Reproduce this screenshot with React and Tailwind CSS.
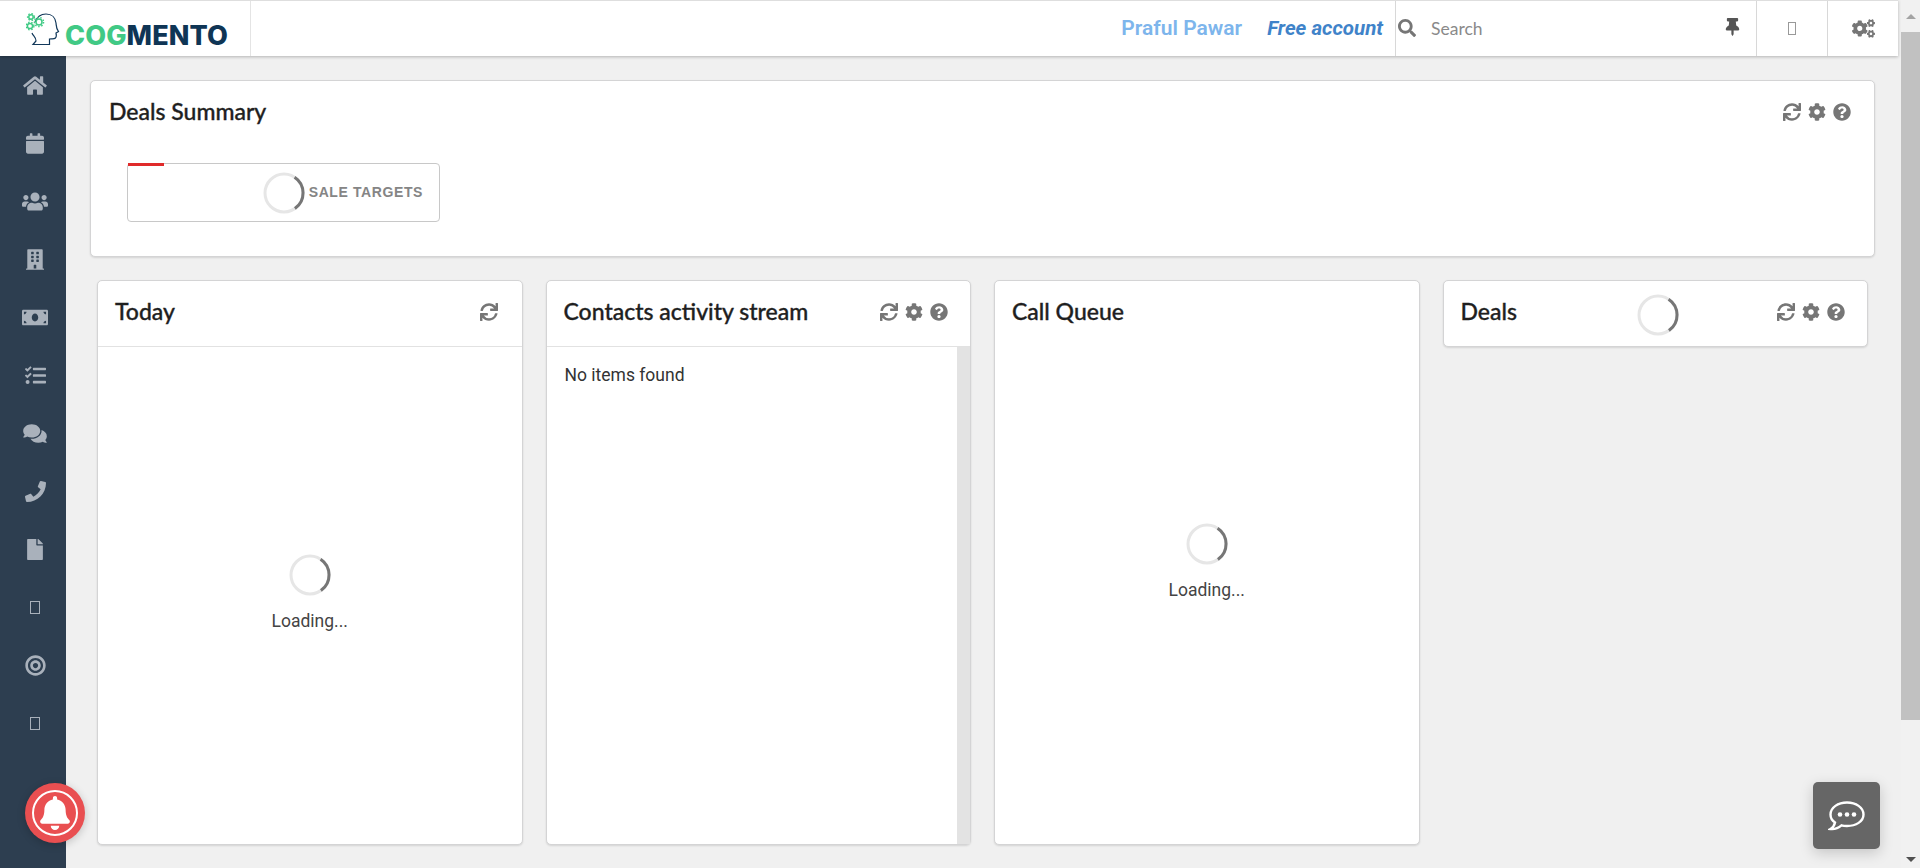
import React from "react";
import {
  FaHome, FaCalendar, FaUsers, FaBuilding, FaMoneyBill, FaTasks, FaComments, FaPhone,
  FaFile, FaBullseye, FaBell, FaSync, FaCog, FaQuestionCircle, FaThumbtack, FaSearch, FaCogs,
} from "react-icons/fa";

// react-icons draws every glyph in a 1em square, so the wide ones get their real size here
const NAV = [
  { Icon: FaHome, size: "w-[24px] h-[21px]" },
  { Icon: FaCalendar, size: "w-[18px] h-[21px]" },
  { Icon: FaUsers, size: "w-[26px] h-[21px]" },
  { Icon: FaBuilding, size: "w-[18px] h-[21px]" },
  { Icon: FaMoneyBill, size: "w-[26px] h-[21px]" },
  { Icon: FaTasks, size: "w-[21px] h-[21px]" },
  { Icon: FaComments, size: "w-[24px] h-[21px]" },
  { Icon: FaPhone, size: "w-[21px] h-[21px]" },
  { Icon: FaFile, size: "w-[16px] h-[21px]" },
  {},
  { Icon: FaBullseye, size: "w-[21px] h-[21px]" },
  {},
];

function Spinner() {
  return (
    <svg width="42" height="42" viewBox="0 0 42 42" className="shrink-0">
      <circle cx="21" cy="21" r="19" fill="none" stroke="#e6e6e6" strokeWidth="3" />
      <path d="M31.6 5.2A19 19 0 0 1 31.9 36.6" fill="none" stroke="#767676" strokeWidth="3" />
    </svg>
  );
}

function Loading() {
  return (
    <div className="flex-1 flex flex-col items-center justify-center">
      <Spinner />
      <div className="mt-[13px] text-[17.5px] leading-[24px] text-[#444]">Loading...</div>
    </div>
  );
}

// refresh / settings / help cluster used on the card headers
function CardIcons({ only }) {
  return (
    <div className={`flex items-center gap-[7px] text-[18px] text-[#767676] ${only ? "mr-[2px]" : ""}`}>
      <FaSync />
      {!only && <FaCog />}
      {!only && <FaQuestionCircle />}
    </div>
  );
}

function Title({ children }) {
  return (
    <h3 className="font-['Lato'] text-[23px] font-medium text-[#1f1f1f] [-webkit-text-stroke:0.35px_#1f1f1f]">{children}</h3>
  );
}

function Card({ title, children, icons, only, className = "" }) {
  return (
    <div className={`bg-white border border-[#d4d4d5] rounded-[5px] shadow-[0_1px_2px_rgba(0,0,0,0.12)] flex flex-col ${className}`}>
      <div className="h-[65px] shrink-0 flex items-center justify-between pl-[17px] pr-[22px] pb-[4px]">
        <Title>{title}</Title>
        {icons}
        <CardIcons only={only} />
      </div>
      {children}
    </div>
  );
}

function Logo() {
  return (
    <div className="h-full flex items-end pl-[26px] pb-[10px]">
      <svg width="34" height="33" viewBox="0 0 34 33" className="shrink-0">
        <path
          d="M9 9C11 4 15 1 20 1C26 1 29.500 5 30 10C30.300 13 30 15 32.500 18.500L30 20C30.500 22 30.500 24 29.500 25C28 26.500 25 25.500 23.500 26V31.500H7L10 28C10 24 7 23 6 20"
          fill="none" stroke="#12385a" strokeWidth="1.200"
        />
        <g fill="none" stroke="#3fca84" strokeWidth="1.500">
          <circle cx="5" cy="4" r="2.200" />
          <circle cx="13" cy="9" r="3" />
          <circle cx="4" cy="13" r="2.600" />
        </g>
        <g fill="none" stroke="#3fca84" strokeWidth="1.400" strokeDasharray="1.500 1.700">
          <circle cx="13" cy="9" r="4.600" />
          <circle cx="4" cy="13" r="3.900" />
          <circle cx="5" cy="4" r="3.400" />
        </g>
      </svg>
      <span className="font-['Inter'] font-extrabold text-[27px] leading-[20px] tracking-[0.1px] ml-[5px]">
        <span className="text-[#41c985]">COG</span>
        <span className="text-[#0f3555]">MENTO</span>
      </span>
    </div>
  );
}

function Header() {
  return (
    <header className="h-[56px] shrink-0 mr-[3px] flex bg-white border-t border-[#dedede] shadow-[0_1px_3px_rgba(0,0,0,0.25)] relative z-10">
      <div className="w-[251px] shrink-0 border-r border-[#e4e4e4]">
        <Logo />
      </div>
      <div className="flex-1 flex items-center justify-end pr-[12px] font-['Roboto']">
        <span className="text-[21px] font-semibold text-[#7db5ec]">Praful Pawar</span>
        <span className="ml-[25px] text-[20.5px] font-bold italic text-[#3f83c9]">Free account</span>
      </div>
      <div className="w-[361px] shrink-0 border-l border-[#d8d8d8] flex items-center pl-[2px] pr-[16px] text-[#767676]">
        <FaSearch className="text-[18px] -mt-[2px]" />
        <span className="ml-[15px] mt-[1px] font-['Lato'] text-[17.5px] text-[#8a8a8a]">Search</span>
        <FaThumbtack className="ml-auto w-[15px] h-[18px] -mt-[3px] text-[#555]" />
      </div>
      <div className="w-[71px] shrink-0 border-l border-[#d8d8d8] flex items-center justify-center">
        <div className="w-[8px] h-[13px] border border-[#999]" />
      </div>
      <div className="w-[71px] shrink-0 border-l border-[#d8d8d8] flex items-center justify-center text-[#767676]">
        <FaCogs className="w-[23px] h-[19px]" />
      </div>
    </header>
  );
}

function Sidebar() {
  return (
    <nav className="w-[66px] shrink-0 bg-[#2d3e50] text-[#a9b1bb]">
      {NAV.map(({ Icon, size }, i) => (
        <div key={i} className="h-[58px] pl-[4px] flex items-center justify-center">
          {Icon ? <Icon className={size} /> : <div className="w-[10px] h-[13px] border border-[#a9b1bb]" />}
        </div>
      ))}
    </nav>
  );
}

function Scrollbar() {
  return (
    <div className="w-[19px] shrink-0 bg-[#f1f1f1] flex flex-col items-center">
      <div className="h-[32px] w-full flex items-center justify-center">
        <div className="w-0 h-0 border-x-[5px] border-x-transparent border-b-[5px] border-b-[#a3a3a3]" />
      </div>
      <div className="h-[688px] w-full bg-[#c1c1c1]" />
      <div className="flex-1" />
      <div className="h-[17px] w-full flex items-center justify-center">
        <div className="w-0 h-0 border-x-[5px] border-x-transparent border-t-[5px] border-t-[#505050]" />
      </div>
    </div>
  );
}

export default function App() {
  return (
    <div className="h-[868px] w-full flex overflow-hidden bg-[#f0f0f0] font-['Roboto'] relative">
      <div className="flex-1 min-w-0 flex flex-col">
        <Header />
        <div className="flex-1 flex min-h-0">
          <Sidebar />
          <main className="flex-1 min-w-0 pt-[24px]">
            <div className="ml-[24px] mr-[26px] h-[177px] bg-white border border-[#d4d4d5] rounded-[5px] shadow-[0_1px_2px_rgba(0,0,0,0.12)]">
              <div className="flex items-center justify-between pl-[18px] pr-[23px] pt-[13px] h-[48px]">
                <Title>Deals Summary</Title>
                <CardIcons />
              </div>
              <div className="ml-[36px] mt-[34px] w-[313px] h-[59px] border border-[#c8c8c8] rounded-[4px] relative flex items-center justify-end pr-[16px]">
                <div className="absolute left-0 -top-px w-[36px] h-[3px] bg-[#e02a2a]" />
                <Spinner />
                <span className="ml-[4px] font-['Liberation_Sans'] text-[14px] font-bold tracking-[0.6px] text-[#858585]">SALE TARGETS</span>
              </div>
            </div>

            <div className="ml-[31px] mr-[33px] mt-[23px] grid grid-cols-4 gap-[23px] items-start">
              <Card title="Today" only className="h-[565px]">
                <div className="flex-1 flex flex-col border-t border-[#e2e2e2] pb-[4px]">
                  <Loading />
                </div>
              </Card>
              <Card title="Contacts activity stream" className="h-[565px]">
                <div className="flex-1 flex border-t border-[#e2e2e2] min-h-0">
                  <div className="flex-1 pl-[18px] pt-[16px] text-[17.5px] leading-[24px] text-[#333]">No items found</div>
                  <div className="w-[13px] bg-[#e3e3e3]" />
                </div>
              </Card>
              <Card title="Call Queue" only className="h-[565px] [&>div:first-child>div]:invisible">
                <div className="flex-1 flex flex-col pb-[66px]">
                  <Loading />
                </div>
              </Card>
              <Card title="Deals" icons={<div className="ml-[120px] mr-auto mt-[6px]"><Spinner /></div>} className="h-[67px]" />
            </div>
          </main>
        </div>
      </div>
      <Scrollbar />

      <div className="absolute left-[25px] top-[783px] w-[60px] h-[60px] rounded-full bg-[#e94f51] shadow-[0_2px_8px_rgba(0,0,0,0.2)] flex items-center justify-center">
        <div className="w-[46px] h-[46px] rounded-full border-2 border-white flex items-center justify-center text-white text-[34px]">
          <FaBell />
        </div>
      </div>

      <div className="absolute left-[1813px] top-[782px] w-[67px] h-[67px] rounded-[5px] bg-[#666] shadow-[0_4px_14px_rgba(0,0,0,0.18)] flex items-center justify-center">
        <svg width="38" height="32" viewBox="0 0 38 32">
          <path d="M19 2.500C28 2.500 35.500 7.500 35.500 14.500C35.500 21.500 28 26 19 26C17 26 15 25.800 13.500 25.300C11 27.500 7 29.500 2.500 29C5 27.500 6.500 25 7 22.500C4 20.500 2.500 17.500 2.500 14.500C2.500 7.500 10 2.500 19 2.500Z" fill="none" stroke="#fff" strokeWidth="2.400" />
          <circle cx="12" cy="14.500" r="2.300" fill="#fff" />
          <circle cx="19" cy="14.500" r="2.300" fill="#fff" />
          <circle cx="26" cy="14.500" r="2.300" fill="#fff" />
        </svg>
      </div>
    </div>
  );
}
